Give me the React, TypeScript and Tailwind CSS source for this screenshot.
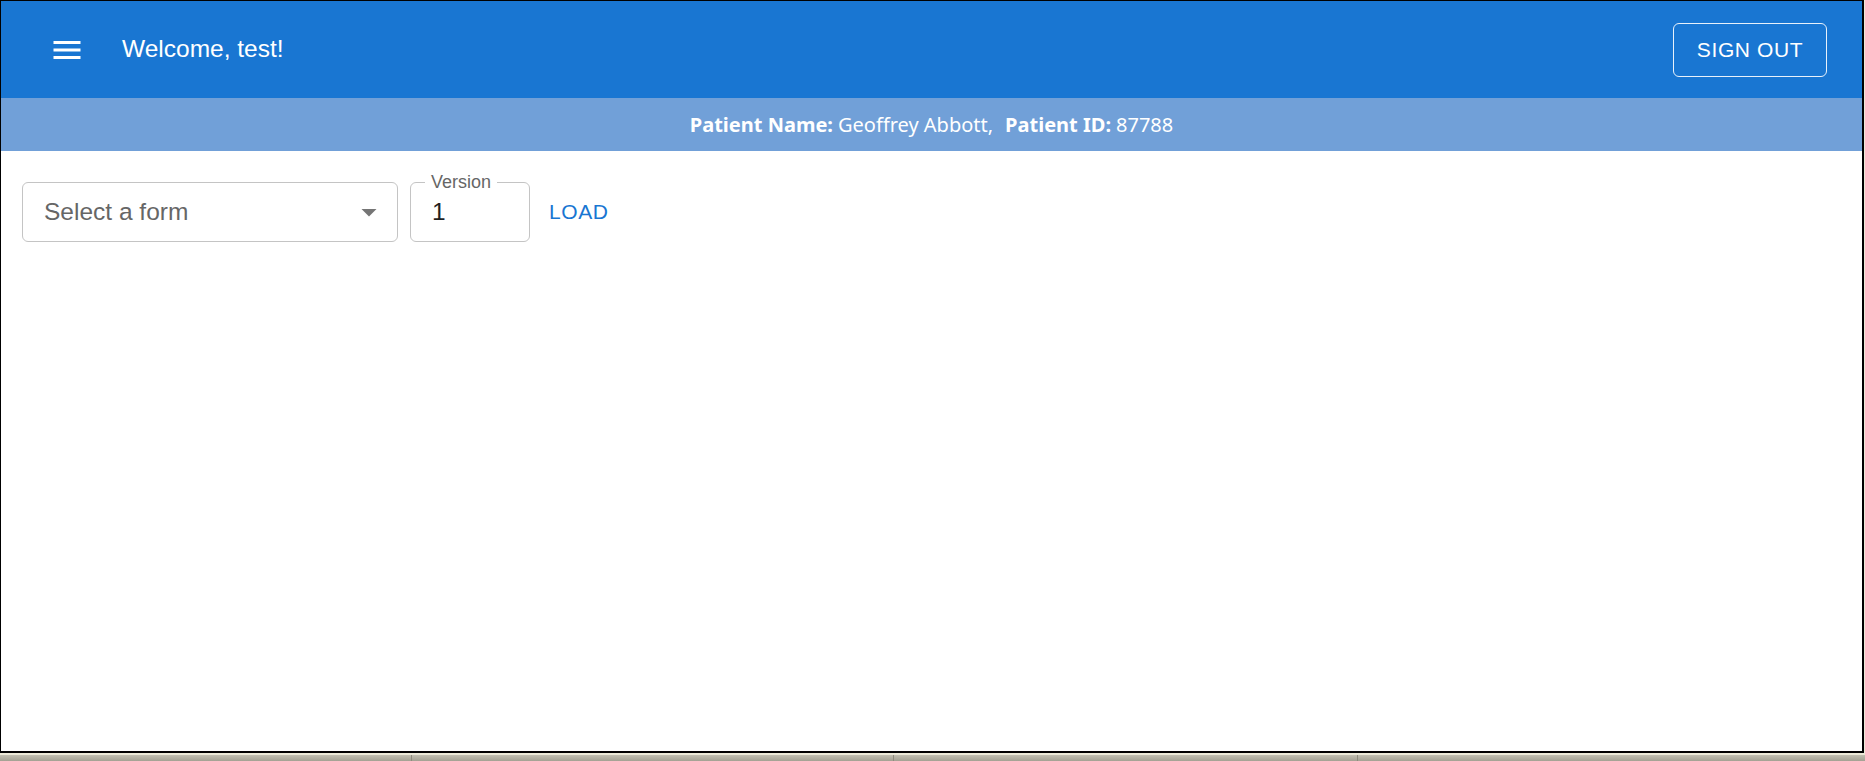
import React from "react";

function MenuIcon() {
  return (
    <svg width="36" height="36" viewBox="0 0 24 24" fill="white" aria-hidden="true">
      <path d="M3 18h18v-2H3v2zm0-5h18v-2H3v2zm0-7v2h18V6H3z" />
    </svg>
  );
}

function ArrowDown() {
  return (
    <svg width="36" height="36" viewBox="0 0 24 24" fill="#757575" aria-hidden="true">
      <path d="M7 10l5 5 5-5z" />
    </svg>
  );
}

export default function App() {
  const sans = { fontFamily: '"Liberation Sans", Arial, sans-serif' };
  return (
    <div className="w-[1865px] h-[761px] bg-[#ece9d8] flex flex-col overflow-hidden" style={sans}>
      <div className="w-[1864px] h-[753px] border-t border-l border-r-2 border-b-2 border-black bg-white flex flex-col">
        {/* App bar */}
        <header className="h-[97px] bg-[#1976d2] flex items-center pl-[48px] pr-[35px] shrink-0">
          <MenuIcon />
          <div className="ml-[37px] text-[24.5px] text-white leading-none">Welcome, test!</div>
          <div className="flex-1" />
          <button className="h-[54px] w-[154px] rounded-[6px] border border-white/90 text-white text-[21px] tracking-[0.6px] uppercase flex items-center justify-center">
            Sign Out
          </button>
        </header>
        {/* Patient bar */}
        <div
          className="h-[53px] bg-[#71a0d8] flex items-center justify-center text-white text-[20px] shrink-0"
          style={{ fontFamily: '"Noto Sans", "Open Sans", sans-serif' }}
        >
          <span className="font-bold">Patient Name:</span>
          <span className="ml-[5px]">Geoffrey Abbott,</span>
          <span className="ml-[12px] font-bold">Patient ID:</span>
          <span className="ml-[5px]">87788</span>
        </div>
        {/* Form row */}
        <div className="flex items-center pl-[21px] pt-[31px]">
          <div className="w-[376px] h-[60px] border border-[#c4c4c4] rounded-[6px] flex items-center pl-[21px] pr-[10px]">
            <span className="text-[24.5px] text-[#666666] leading-none flex-1">Select a form</span>
            <ArrowDown />
          </div>
          <div className="relative ml-[12px] w-[120px] h-[60px] border border-[#c4c4c4] rounded-[6px] flex items-center pl-[21px]">
            <span className="absolute left-[14px] top-[-12px] bg-white px-[6px] text-[18px] leading-[22px] text-[#666666]">
              Version
            </span>
            <span className="text-[24.5px] text-[#1f1f1f] leading-none">1</span>
          </div>
          <button className="ml-[19px] mb-[2px] text-[21px] tracking-[0.6px] text-[#1976d2] uppercase leading-none">
            Load
          </button>
        </div>
      </div>
      <div className="mt-[2px] h-[6px] bg-gradient-to-b from-[#c2bfb1] to-[#a4a193] relative">
        <div className="absolute left-[411px] top-0 h-full w-px bg-[#8f8c7e]" />
        <div className="absolute left-[893px] top-0 h-full w-px bg-[#8f8c7e]" />
        <div className="absolute left-[1357px] top-0 h-full w-px bg-[#8f8c7e]" />
      </div>
    </div>
  );
}
